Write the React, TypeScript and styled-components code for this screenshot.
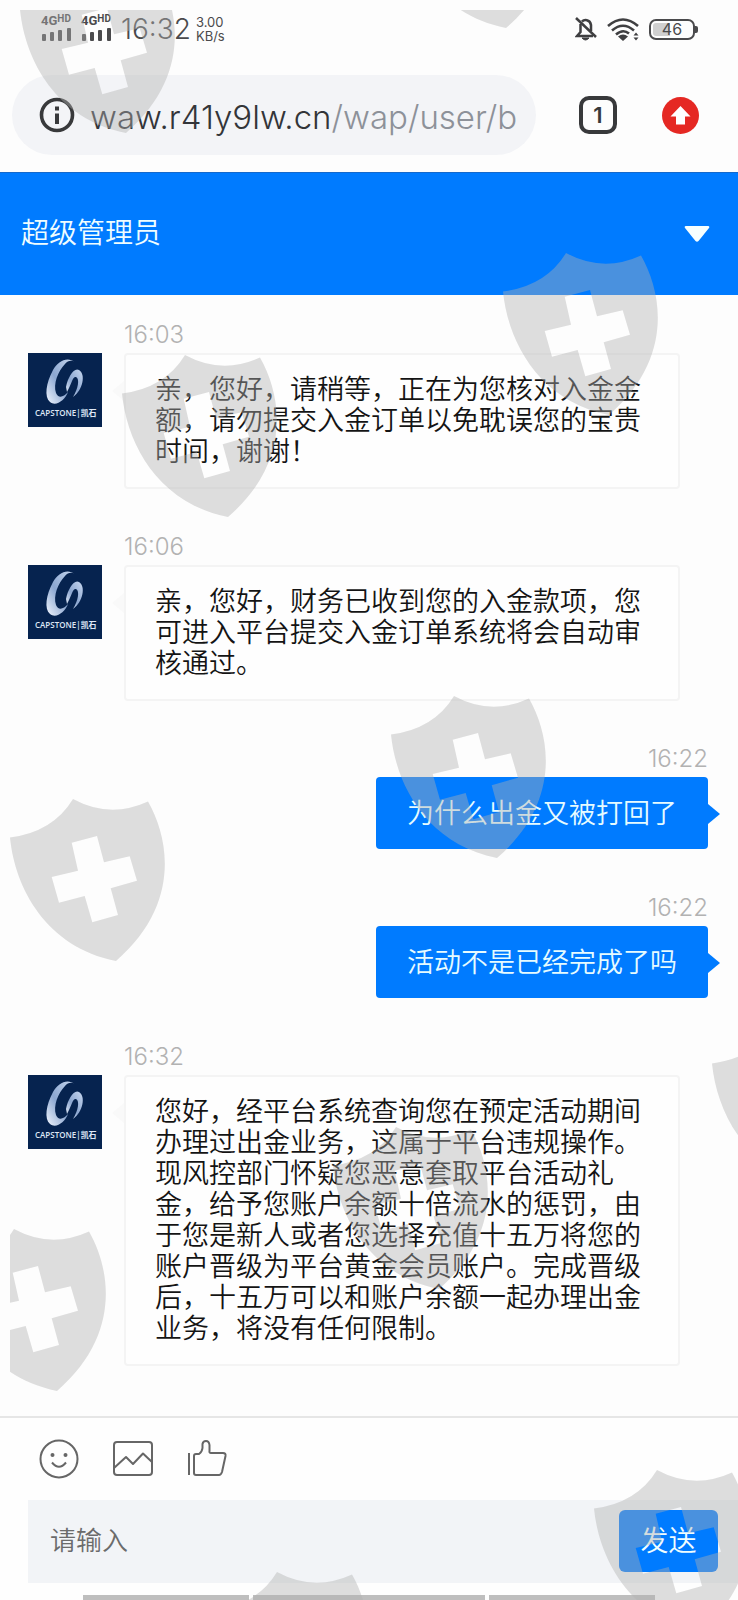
import React from "react";
import styled, { createGlobalStyle } from "styled-components";

const GlobalStyle = createGlobalStyle`
  *, *::before, *::after { box-sizing: border-box; }
  body {
    margin: 0;
    background: #fdfdfd;
    font-family: Inter, "Noto Sans CJK SC", sans-serif;
    font-weight: 300;
    color: #1c1c1e;
  }
  button {
    font: inherit;
    color: inherit;
    border: 0;
    padding: 0;
    background: none;
    cursor: pointer;
  }
  svg { display: block; }
`;

const cjk = `"Noto Sans CJK SC", sans-serif`;

const Page = styled.div`
  position: relative;
  min-height: 100vh;
  display: flex;
  flex-direction: column;
  overflow: hidden;
`;

/* ---------- phone status bar ---------- */

const StatusBar = styled.div`
  height: 58px;
  padding: 0 43px 0 41px;
  display: flex;
  align-items: center;
  color: #4a4a4c;
`;

const Signals = styled.div`
  display: flex;
  gap: 8px;
  margin-right: 8px;
  padding-bottom: 4px;
`;

const Signal = styled.div`
  width: 32px;
  display: flex;
  flex-direction: column;
  gap: 1px;
`;

const Network = styled.div`
  display: flex;
  align-items: flex-start;
  font: 700 13px/13px Roboto, sans-serif;
  sup {
    font-size: 10px;
    line-height: 9px;
    vertical-align: baseline;
  }
`;

const Clock = styled.time`
  font-size: 28px;
  line-height: 32px;
  margin-right: 5px;
`;

const Speed = styled.div`
  flex: 1;
  display: flex;
  flex-direction: column;
  font-size: 13px;
  line-height: 14px;
  font-weight: 400;
`;

const StatusIcons = styled.div`
  display: flex;
  align-items: center;
  gap: 10px;
`;

const Battery = styled.div`
  position: relative;
  width: 46px;
  height: 21px;
  border: 2px solid #4a4a4c;
  border-radius: 7px;
  background: linear-gradient(90deg, #cfcfcf 46%, #fdfdfd 46%);
  background-clip: content-box;
  padding: 2px;
  font-size: 16px;
  line-height: 13px;
  text-align: center;
  font-weight: 400;
  &::after {
    content: "";
    position: absolute;
    right: -5px;
    top: 5px;
    width: 3px;
    height: 7px;
    border-radius: 0 2px 2px 0;
    background: #4a4a4c;
  }
`;

/* ---------- browser bar ---------- */

const BrowserBar = styled.div`
  display: flex;
  align-items: center;
  padding: 17px 39px 17px 12px;
`;

const AddressPill = styled.div`
  flex: 1;
  min-width: 0;
  height: 80px;
  border-radius: 40px;
  background: #f3f4f7;
  display: flex;
  align-items: center;
  gap: 15px;
  padding: 0 19px 0 27px;
`;

const Address = styled.a`
  flex: 1;
  min-width: 0;
  overflow: hidden;
  white-space: nowrap;
  padding-top: 4px;
  font-size: 33px;
  line-height: 44px;
  color: #333539;
  text-decoration: none;
  span { color: #8d9199; }
`;

const TabCount = styled.button`
  width: 38px;
  height: 38px;
  margin: 0 45px 0 43px;
  border: 4px solid #38393b;
  border-radius: 10px;
  font-size: 22px;
  line-height: 28px;
  font-weight: 600;
  color: #38393b;
`;

/* ---------- chat header ---------- */

const ChatHeader = styled.header`
  height: 123px;
  display: flex;
  align-items: center;
  justify-content: space-between;
  padding: 0 28px 0 21px;
  background: #007bff;
  border-top: 1px solid #1469cc;
  color: #effdff;
`;

const Title = styled.h1`
  margin: 0;
  padding-bottom: 6px;
  font-family: ${cjk};
  font-size: 28px;
  line-height: 40px;
  font-weight: 350;
`;

/* ---------- messages ---------- */

const Chat = styled.main`
  flex: 1;
  padding: 25px 30px 0 28px;
  background: #fdfdfd;
`;

const Received = styled.article`
  display: grid;
  grid-template-columns: 74px minmax(0, 1fr);
  column-gap: 22px;
  row-gap: 3px;
  padding: 0 28px 43px 0;
`;

const Sent = styled.article`
  display: flex;
  flex-direction: column;
  align-items: flex-end;
  gap: 3px;
  padding-bottom: 44px;
`;

const Stamp = styled.time`
  grid-column: 2;
  font-size: 24px;
  font-weight: 350;
  line-height: 30px;
  color: #b2b2b2;
`;

const Bubble = styled.p<{ $own?: boolean }>`
  position: relative;
  margin: 0;
  padding: ${(p) => (p.$own ? "19px 31px 22px" : "19px 31px 24px")};
  font-family: ${cjk};
  font-size: 27px;
  font-weight: 350;
  line-height: 31px;
  color: ${(p) => (p.$own ? "#e6fbff" : "#141414")};
  background: ${(p) => (p.$own ? "#007bff" : "#fefefe")};
  box-shadow: ${(p) => (p.$own ? "none" : "inset 0 0 0 2px #f4f4f4")};
  border-radius: 4px;
  &::before {
    content: "";
    position: absolute;
    top: ${(p) => (p.$own ? "27px" : "28px")};
    ${(p) => (p.$own ? "left: 100%;" : "right: 100%;")}
    border: solid transparent;
    border-width: 10px 12px;
    ${(p) => (p.$own ? "border-left-color: #007bff; border-right-width: 0;" : "border-right-color: #f9f9f9; border-left-width: 0;")}
  }
`;

/* ---------- composer ---------- */

const Composer = styled.form`
  border-top: 2px solid #e6e6e6;
  background: #fefefe;
`;

const Tools = styled.div`
  display: flex;
  align-items: center;
  gap: 34px;
  height: 82px;
  padding: 0 39px;
`;

const Entry = styled.div`
  display: flex;
  align-items: center;
  height: 83px;
  margin-left: 28px;
  padding: 0 20px 2px 22px;
  background: #f2f4f7;
`;

const TextBox = styled.input`
  flex: 1;
  min-width: 0;
  border: 0;
  padding: 0 0 4px;
  outline: 0;
  background: transparent;
  font: 350 26px/40px ${cjk};
  color: #141414;
  &::placeholder { color: #6b6b6b; opacity: 1; }
`;

const Send = styled.button`
  width: 99px;
  height: 62px;
  padding-bottom: 4px;
  border-radius: 6px;
  background: #007bff;
  color: #effdff;
  font-family: ${cjk};
  font-size: 28px;
  font-weight: 350;
  line-height: 40px;
`;

const NavStrip = styled.div`
  display: grid;
  grid-template-columns: 166fr 231fr 166fr;
  gap: 4px;
  padding: 12px 83px 0;
  div { height: 5px; background: #bebebe; }
`;

/* ---------- shield watermarks ---------- */

const ShieldLayer = styled.div`
  position: absolute;
  inset: 10px 0 0 10px;
  overflow: hidden;
  pointer-events: none;
`;

const Shield = styled.svg<{ $x: number; $y: number }>`
  position: absolute;
  left: ${(p) => p.$x}px;
  top: ${(p) => p.$y}px;
`;

const shields: [number, number][] = [
  [10, -40],
  [390, -145],
  [493, 242],
  [112, 344],
  [381, 685],
  [0, 788],
  [702, 1014],
  [323, 1116],
  [-59, 1218],
  [204, 1561],
  [584, 1459],
];

function Shields() {
  return (
    <ShieldLayer aria-hidden="true">
      {shields.map(([x, y]) => (
        <Shield key={`${x}:${y}`} $x={x} $y={y} width="156" height="164" viewBox="0 0 156 164">
          <path
            fill="#b0b0b0"
            fillOpacity=".42"
            fillRule="evenodd"
            d="M63 1Q100 21 138 3.500C160 42 170 108 106 163C36 149 5 90 0 39.500Q43 34 63 1ZM61.700 44.700L87 38L94 64.300L119.700 58.300L127 82.700L100.700 90.300L108 117L82.300 124.300L74.700 98L49 104.700L41.700 79L68 72.700Z"
          />
        </Shield>
      ))}
    </ShieldLayer>
  );
}

function Avatar() {
  return (
    <svg width="74" height="74" viewBox="0 0 74 74" role="img" aria-label="CAPSTONE 凯石">
      <defs>
        <linearGradient id="steel" x1="0" y1="1" x2="1" y2="0">
          <stop offset="0" stopColor="#f2f7ff" />
          <stop offset=".45" stopColor="#8ba6d0" />
          <stop offset="1" stopColor="#c8d8f0" />
        </linearGradient>
      </defs>
      <rect width="74" height="74" fill="#06234f" />
      <path fill="url(#steel)" d="M47 9C39 3 30 8 25 17C18 30 16 44 22 49C28 54 37 47 40 39C35 45 30 45 28 40C25 31 30 18 37 11C40 7 44 7 47 9Z" />
      <path fill="url(#steel)" d="M38 34C40 24 46 14 51 17C58 21 55 37 45 44C50 36 52 26 48 24C45 23 44 29 41 35L39 39Z" />
      <text x="7" y="63" fontFamily='"Open Sans", "Noto Sans CJK SC", sans-serif' fontSize="8" fontWeight="600" fill="#dfe8f6">
        CAPSTONE|凯石
      </text>
    </svg>
  );
}

function SignalMeter() {
  return (
    <Signal>
      <Network>
        4G<sup>HD</sup>
      </Network>
      <svg width="32" height="13" viewBox="0 0 32 13" fill="#4a4a4c">
        <rect x="1" y="6" width="4" height="7" rx="1" />
        <rect x="9" y="4" width="4" height="9" rx="1" />
        <rect x="17" y="2" width="4" height="11" rx="1" />
        <rect x="26" y="0" width="4" height="13" rx="1" />
      </svg>
    </Signal>
  );
}

interface Message {
  time: string;
  text: string;
  own?: boolean;
}

const messages: Message[] = [
  { time: "16:03", text: "亲，您好，请稍等，正在为您核对入金金额，请勿提交入金订单以免耽误您的宝贵时间，谢谢！" },
  { time: "16:06", text: "亲，您好，财务已收到您的入金款项，您可进入平台提交入金订单系统将会自动审核通过。" },
  { time: "16:22", text: "为什么出金又被打回了", own: true },
  { time: "16:22", text: "活动不是已经完成了吗", own: true },
  {
    time: "16:32",
    text: "您好，经平台系统查询您在预定活动期间办理过出金业务，这属于平台违规操作。现风控部门怀疑您恶意套取平台活动礼金，给予您账户余额十倍流水的惩罚，由于您是新人或者您选择充值十五万将您的账户晋级为平台黄金会员账户。完成晋级后，十五万可以和账户余额一起办理出金业务，将没有任何限制。",
  },
];

export default function App() {
  return (
    <Page lang="zh-CN">
      <GlobalStyle />
      <StatusBar>
        <Signals>
          <SignalMeter />
          <SignalMeter />
        </Signals>
        <Clock>16:32</Clock>
        <Speed>
          <span>3.00</span>
          <span>KB/s</span>
        </Speed>
        <StatusIcons>
          <svg width="22" height="24" viewBox="0 0 22 24" fill="none" stroke="#3f3f41" strokeWidth="2.500">
            <path d="M5.500 7V15L2 19H18M7 4.500C9 2.500 15 2 16 8V14" />
            <path d="M1 1L21 20" />
            <path d="M7 21Q10.500 25 14 21Z" fill="#3f3f41" strokeWidth="1" />
          </svg>
          <svg width="32" height="23" viewBox="0 0 32 23" fill="none" stroke="#3f3f41" strokeWidth="2.600">
            <path d="M1 8Q16-5 31 8M5 12.500Q16 3 27 12.500M9 16.500Q16 10.500 22 15.500" />
            <path d="M11 18.500Q16 14.500 21 18.500L16 23Z" fill="#3f3f41" stroke="none" />
            <path d="M26.500 17.500L29 14.500L31.500 17.500ZM26.500 19.500L29 22.500L31.500 19.500Z" fill="#3f3f41" stroke="none" />
          </svg>
          <Battery>46</Battery>
        </StatusIcons>
      </StatusBar>

      <BrowserBar>
        <AddressPill>
          <svg width="36" height="36" viewBox="0 0 36 36" role="img" aria-label="网站信息">
            <circle cx="18" cy="18" r="15.500" fill="none" stroke="#38393b" strokeWidth="3.600" />
            <path d="M18 9.500V13.500M18 16.500V27" stroke="#38393b" strokeWidth="4" />
          </svg>
          <Address href="#">
            waw.r41y9lw.cn<span>/wap/user/b</span>
          </Address>
        </AddressPill>
        <TabCount aria-label="标签页">1</TabCount>
        <button aria-label="更新">
          <svg width="37" height="37" viewBox="0 0 37 37">
            <circle cx="18.500" cy="18.500" r="18.500" fill="#e52823" />
            <path d="M18.500 9L28.500 19.500H23V27.500H14V19.500H8.500Z" fill="#fff" />
          </svg>
        </button>
      </BrowserBar>

      <ChatHeader>
        <Title>超级管理员</Title>
        <button aria-label="收起">
          <svg width="26" height="16" viewBox="0 0 26 16">
            <path d="M2 0H24Q26 0 25 2L14.500 15Q13 16.500 11.500 15L1 2Q0 0 2 0Z" fill="#f6ffff" />
          </svg>
        </button>
      </ChatHeader>

      <Chat>
        {messages.map((m, i) =>
          m.own ? (
            <Sent key={i}>
              <Stamp>{m.time}</Stamp>
              <Bubble $own>{m.text}</Bubble>
            </Sent>
          ) : (
            <Received key={i}>
              <Stamp>{m.time}</Stamp>
              <Avatar />
              <Bubble>{m.text}</Bubble>
            </Received>
          )
        )}
      </Chat>

      <Composer onSubmit={(e) => e.preventDefault()}>
        <Tools>
          <button type="button" aria-label="表情">
            <svg width="40" height="40" viewBox="0 0 40 40" fill="none" stroke="#666" strokeWidth="2">
              <circle cx="20" cy="20" r="18.500" />
              <circle cx="13.500" cy="16" r="2" fill="#666" stroke="none" />
              <circle cx="26.500" cy="16" r="2" fill="#666" stroke="none" />
              <path d="M13 23.500Q20 32 27 23.500" />
            </svg>
          </button>
          <button type="button" aria-label="图片">
            <svg width="40" height="40" viewBox="0 0 40 40" fill="none" stroke="#666" strokeWidth="2" strokeLinejoin="round">
              <rect x="1" y="3" width="38" height="33" rx="3" />
              <path d="M1 29L13 18L20 25L30 14.500L39 23" />
            </svg>
          </button>
          <button type="button" aria-label="点赞">
            <svg width="40" height="40" viewBox="0 0 40 40" fill="none" stroke="#666" strokeWidth="2" strokeLinejoin="round">
              <path d="M2 14V36M7 17Q7 15 9 15H12Q15 13 15.500 9V5Q16 2 19 2Q22 2 22.500 6V12Q22 14 24 14H36Q39 14 38.500 17L35 33Q34 36 32 36H9Q7 36 7 34Z" />
            </svg>
          </button>
        </Tools>
        <Entry>
          <TextBox placeholder="请输入" aria-label="请输入" />
          <Send type="submit">发送</Send>
        </Entry>
        <NavStrip>
          <div />
          <div />
          <div />
        </NavStrip>
      </Composer>
      <Shields />
    </Page>
  );
}
